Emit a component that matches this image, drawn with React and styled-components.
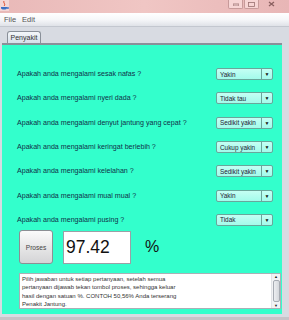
import React from 'react';
import styled, { createGlobalStyle } from 'styled-components';

const GlobalStyle = createGlobalStyle`
  html, body {
    margin: 0;
    padding: 0;
    width: 289px;
    height: 320px;
    overflow: hidden;
    background: #e9c2c2;
  }
`;

const questions = [
  ['Apakah anda mengalami sesak nafas ?', 'Yakin'],
  ['Apakah anda mengalami nyeri dada ?', 'Tidak tau'],
  ['Apakah anda mengalami denyut jantung yang cepat ?', 'Sedikit yakin'],
  ['Apakah anda mengalami keringat berlebih ?', 'Cukup yakin'],
  ['Apakah anda mengalami kelelahan ?', 'Sedikit yakin'],
  ['Apakah anda mengalami mual mual ?', 'Yakin'],
  ['Apakah anda mengalami pusing ?', 'Tidak'],
];

const infoLines = [
  'Pilih jawaban untuk setiap pertanyaan, setelah semua',
  'pertanyaan dijawab tekan tombol proses, sehingga keluar',
  'hasil dengan satuan %. CONTOH 50,56% Anda terserang',
  'Penakit Jantung.',
];

const Window = styled.div`
  display: flex;
  flex-direction: column;
  width: 289px;
  height: 320px;
  font-family: 'Liberation Sans', sans-serif;
`;

const TitleBar = styled.div`
  height: 13px;
  display: flex;
  align-items: flex-start;
  justify-content: space-between;
  background: linear-gradient(90deg, #e9b9b8, #f0c6c4 50%, #e8b6b6);
`;

const WinButtons = styled.div`
  display: flex;
  gap: 1px;
  margin-right: 7px;
`;

const WinButton = styled.div`
  width: ${(p) => p.w}px;
  height: 8px;
  border: 1px solid ${(p) => (p.plain ? 'transparent' : '#c79a9a')};
  border-top: none;
  border-radius: 0 0 2px 2px;
  display: flex;
  align-items: center;
  justify-content: center;
  background: ${(p) => (p.plain ? 'transparent' : 'rgba(255,230,230,0.6)')};
`;

const MenuBar = styled.div`
  height: 13px;
  display: flex;
  align-items: center;
  gap: 6px;
  padding-left: 4px;
  background: linear-gradient(#ffffff, #f6f7f9 50%, #dfe2e8);
  border-bottom: 1px solid #c3c7cf;
`;

const MenuItem = styled.span`
  font-size: 7.5px;
  color: #555;
`;

const Frame = styled.div`
  flex: 1;
  display: flex;
  flex-direction: column;
  background: #d8dbe2;
  padding: 4px 7px 3px 2px;
  border-bottom: 3px solid #c8c3c8;
`;

const TabStrip = styled.div`
  display: flex;
  padding-left: 5px;
  height: 12px;
`;

const Tab = styled.div`
  width: 34px;
  height: 12px;
  box-sizing: border-box;
  border: 1px solid #8a9099;
  border-bottom: none;
  border-radius: 3px 3px 0 0;
  background: linear-gradient(#f4f7fa, #d6e0ea);
  font-size: 7px;
  color: #333;
  display: flex;
  align-items: center;
  justify-content: center;
`;

const Panel = styled.div`
  flex: 1;
  display: flex;
  flex-direction: column;
  background: #33ffcc;
  border-top: 2px solid #8a8f99;
  padding: 17px 0 4px 15px;
`;

const Row = styled.div`
  height: 24.3px;
  display: grid;
  grid-template-columns: 199px 57px;
  align-items: center;
`;

const Question = styled.span`
  font-size: 7.1px;
  color: #103048;
  white-space: nowrap;
`;

const Combo = styled.div`
  height: 12px;
  box-sizing: border-box;
  border: 1px solid #6aa69b;
  border-radius: 2px;
  background: linear-gradient(#c4fff4, #a3fbeb);
  display: flex;
  align-items: stretch;
`;

const ComboText = styled.span`
  flex: 1;
  font-size: 6.4px;
  color: #223;
  padding-left: 3px;
  display: flex;
  align-items: center;
  white-space: nowrap;
`;

const ComboArrow = styled.span`
  width: 10px;
  border-left: 1px solid #6aa69b;
  display: flex;
  align-items: center;
  justify-content: center;
  font-size: 5px;
  color: #111;
`;

const ResultRow = styled.div`
  display: flex;
  align-items: center;
  height: 34px;
  margin-top: -2px;
  padding-left: 2px;
`;

const ProsesButton = styled.div`
  width: 34px;
  height: 34px;
  box-sizing: border-box;
  border: 1px solid #8c8f94;
  border-radius: 3px;
  background: linear-gradient(#fbfbfb, #e9e9e9 45%, #d4d4d6);
  font-size: 6.6px;
  color: #444;
  display: flex;
  align-items: center;
  justify-content: center;
`;

const Field = styled.div`
  width: 68px;
  height: 33px;
  box-sizing: border-box;
  margin-left: 10px;
  background: #fff;
  border: 1px solid #9aa0a6;
  font-size: 17.5px;
  color: #111;
  display: flex;
  align-items: center;
  padding-left: 2px;
`;

const Percent = styled.span`
  margin-left: 14px;
  font-size: 16px;
  color: #111;
`;

const Info = styled.div`
  margin-top: 9px;
  margin-left: 2px;
  width: 262px;
  height: 36px;
  box-sizing: border-box;
  background: #fff;
  border: 1px solid #a9b0b6;
  display: flex;
`;

const InfoText = styled.div`
  flex: 1;
  padding: 1px 2px;
  font-size: 6px;
  line-height: 8.3px;
  color: #333;
  white-space: nowrap;
`;

const ScrollBar = styled.div`
  width: 8px;
  display: flex;
  flex-direction: column;
  justify-content: space-between;
  align-items: center;
  border-left: 1px solid #e2e4e8;
  background: #f2f3f5;
  font-size: 4px;
  color: #222;
`;

const Thumb = styled.div`
  width: 7px;
  flex: 1;
  margin: 1px 0;
  border: 1px solid #a6abb3;
  border-radius: 2px;
  box-sizing: border-box;
  background: linear-gradient(90deg, #eceef1, #d5d8dd);
`;

export default function App() {
  return (
    <Window>
      <GlobalStyle />
      <TitleBar>
        <svg width="9" height="11" viewBox="0 0 9 11">
          <rect x="0" y="0" width="9" height="11" fill="#f3d6d6" />
          <path d="M4 1 C3 3 6 4 4 6" stroke="#e0401c" strokeWidth="1" fill="none" />
          <path d="M1 7 h6 v1 c0 2-6 2-6 0 z" fill="#3b6fc4" />
          <path d="M7 7.5 h1.5 v1 h-1.5" stroke="#3b6fc4" strokeWidth="0.8" fill="none" />
        </svg>
        <WinButtons>
          <WinButton w={13}>
            <svg width="6" height="3"><rect x="0" y="1" width="6" height="2" fill="none" stroke="#9a7070" strokeWidth="0.8" /></svg>
          </WinButton>
          <WinButton w={13}>
            <svg width="7" height="5"><rect x="0.5" y="0.5" width="6" height="4" fill="none" stroke="#9a7070" strokeWidth="0.8" /></svg>
          </WinButton>
          <WinButton w={20} plain>
            <svg width="7" height="6"><path d="M1 1 L6 5 M6 1 L1 5" stroke="#8a6060" strokeWidth="1.3" /></svg>
          </WinButton>
        </WinButtons>
      </TitleBar>
      <MenuBar>
        <MenuItem>File</MenuItem>
        <MenuItem>Edit</MenuItem>
      </MenuBar>
      <Frame>
        <TabStrip>
          <Tab>Penyakit</Tab>
        </TabStrip>
        <Panel>
          {questions.map(([q, a]) => (
            <Row key={q}>
              <Question>{q}</Question>
              <Combo>
                <ComboText>{a}</ComboText>
                <ComboArrow>▼</ComboArrow>
              </Combo>
            </Row>
          ))}
          <ResultRow>
            <ProsesButton>Proses</ProsesButton>
            <Field>97.42</Field>
            <Percent>%</Percent>
          </ResultRow>
          <Info>
            <InfoText>
              {infoLines.map((l) => (
                <div key={l}>{l}</div>
              ))}
            </InfoText>
            <ScrollBar>
              <span>▲</span>
              <Thumb />
              <span>▼</span>
            </ScrollBar>
          </Info>
        </Panel>
      </Frame>
    </Window>
  );
}
